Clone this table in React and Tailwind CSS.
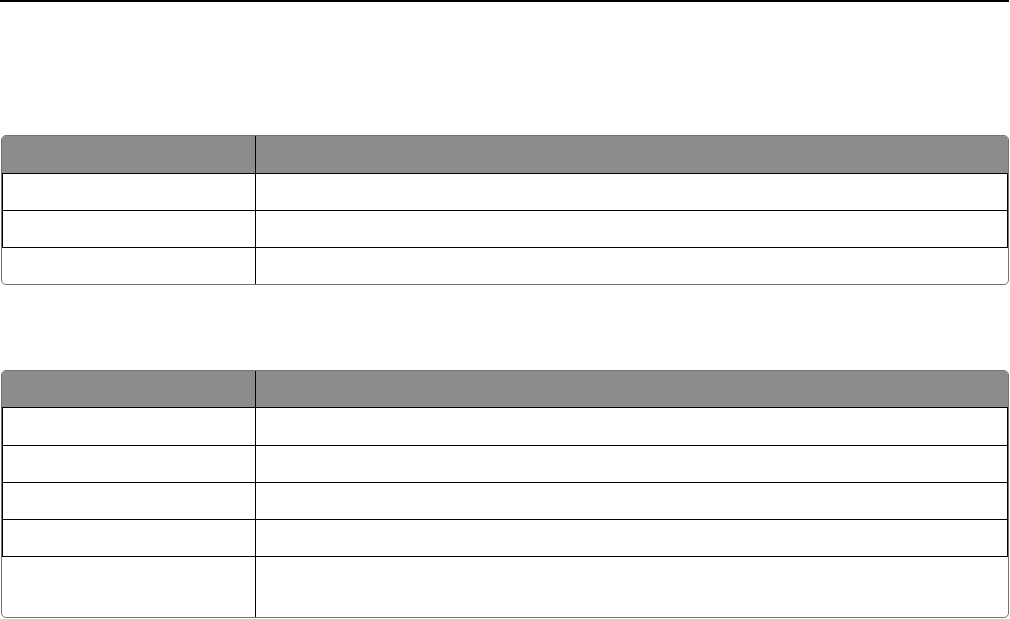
import React from "react";

function Table({ headerH, rows }) {
  return (
    <div className="ml-[1px] w-[1008px] rounded-[5px] border border-[#737373] overflow-hidden">
      <div className="flex bg-[#8c8c8c]" style={{ height: headerH }}>
        <div className="w-[254px] border-r border-black" />
        <div className="flex-1" />
      </div>
      {rows.map((h, i) => (
        <div
          key={i}
          className={
            "flex border-t border-black " +
            (i < rows.length - 1 ? "border-x border-x-black" : "")
          }
          style={{ height: h }}
        >
          <div
            className={
              "border-r border-black " +
              (i < rows.length - 1 ? "w-[253px]" : "w-[254px]")
            }
          />
          <div className="flex-1" />
        </div>
      ))}
    </div>
  );
}

export default function App() {
  return (
    <div className="w-[1010px] h-[619px] bg-white overflow-hidden">
      <div className="h-[2px] w-[1009px] bg-black" />
      <div className="mt-[133px]">
        <Table headerH={37} rows={[37, 37, 37]} />
      </div>
      <div className="mt-[85px]">
        <Table headerH={36} rows={[38, 37, 37, 37, 61]} />
      </div>
    </div>
  );
}
